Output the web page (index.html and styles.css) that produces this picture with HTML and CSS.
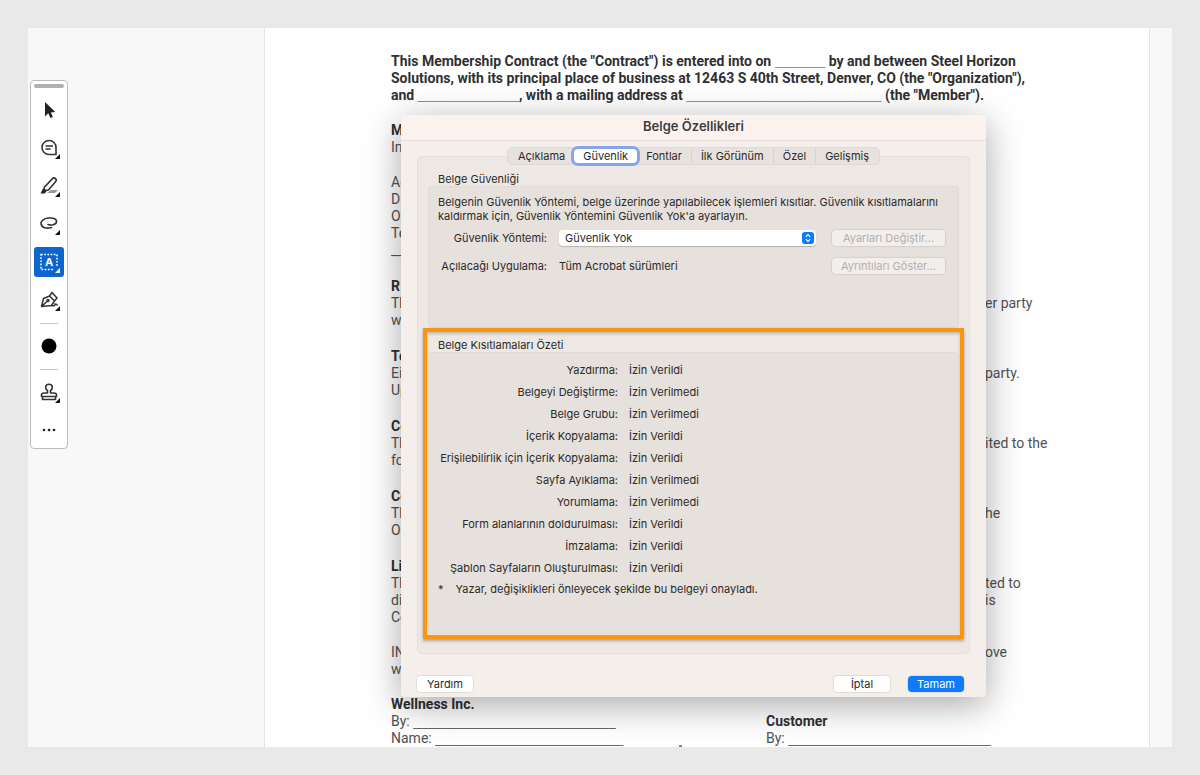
FILE: index.html
```html
<!DOCTYPE html>
<html lang="tr">
<head>
    <meta charset="UTF-8">
    <meta name="viewport" content="width=device-width, initial-scale=1.0">
    <title>Belge Özellikleri</title>
    <link rel="stylesheet" href="styles.css">
</head>
<body>

    <div class="viewer">
        <aside class="sidebar">
            <div class="toolbar">
                <span class="handle"></span>
                <button class="tool" aria-label="Select">
                    <svg width="30" height="30" viewBox="0 0 30 30"><path d="M11 7v14.500l3.300-3.200 2.100 4.700 2.500-1.100-2.100-4.500 4.500-.4z" fill="#222"/></svg>
                </button>
                <button class="tool" aria-label="Comment">
                    <svg width="30" height="30" viewBox="0 0 30 30" fill="none" stroke="#333" stroke-width="1.600"><path d="M15 7.500a7 7 0 1 0 0 14h7v-7a7 7 0 0 0-7-7z"/><path d="M11.500 13h7.500M11.500 16h5"/><path class="corner" d="M26 21v5h-5z"/></svg>
                </button>
                <button class="tool" aria-label="Highlight">
                    <svg width="30" height="30" viewBox="0 0 30 30" fill="none" stroke="#333" stroke-width="1.600" stroke-linejoin="round"><path d="M13 22h8l3-3h-7z" fill="#999" stroke="none"/><path d="M10.500 16 18.500 7.600q1.500-1.300 3 0 1.500 1.500.2 3L14.500 19l-3 .5-1.500-1.500z"/><path d="M6.500 22.500 9 17.500l3.500 3-2 2z" fill="#222" stroke="none"/><path class="corner" d="M26 21v5h-5z"/></svg>
                </button>
                <button class="tool" aria-label="Draw">
                    <svg width="30" height="30" viewBox="0 0 30 30" fill="none" stroke="#333" stroke-width="1.600" stroke-linecap="round"><path d="M14 15.500c3 1 8 .3 8.500-2.500.4-3.500-4-4.300-8-4-4.700.4-8 3-7.400 6 .7 3.800 5.500 5 10.400 3.500"/><path class="corner" d="M26 21v5h-5z"/></svg>
                </button>
                <button class="tool active" aria-label="Select text">
                    <svg width="30" height="30" viewBox="0 0 30 30"><path d="M7 7.500h16v15H7z" fill="none" stroke="#fff" stroke-width="1.500" stroke-dasharray="1.700 1.500"/><text x="15" y="19" text-anchor="middle" class="tool-letter">A</text><path d="M20 20h7v7h-7z" fill="#0d66d0"/><path d="M26 21v5h-5z" fill="#fff"/></svg>
                </button>
                <button class="tool" aria-label="Sign">
                    <svg width="30" height="30" viewBox="0 0 30 30" fill="none" stroke="#333" stroke-width="1.500" stroke-linejoin="round"><path d="M7.500 21.500 9.500 13.500 15.500 11l5 5-3 4.500zM15.500 11 18 7.500l5 5.500-2.500 3M7.500 21.500l6-5.500"/><circle cx="14" cy="15.500" r="1"/><path d="M17.500 20.500q4 1 3.500-1.500 2 0 2.500 1.500"/><path class="corner" d="M26 21v5h-5z"/></svg>
                </button>
                <span class="divider"></span>
                <button class="tool" aria-label="Color">
                    <svg width="30" height="30" viewBox="0 0 30 30"><circle cx="15" cy="15" r="7.500" fill="#000"/></svg>
                </button>
                <span class="divider"></span>
                <button class="tool" aria-label="Stamp">
                    <svg width="30" height="30" viewBox="0 0 30 30" fill="none" stroke="#333" stroke-width="1.600" stroke-linejoin="round"><path d="M13.500 16v-2.500q-1.800-1-1.800-3a3.300 3.200 0 0 1 6.600 0q0 2-1.800 3V16h3.500q2.500 0 2.500 2v1.500h-15V18q0-2 2.500-2zM8.500 19.500v3h13v-3"/><path class="corner" d="M26 21v5h-5z"/></svg>
                </button>
                <button class="tool" aria-label="More">
                    <svg width="30" height="30" viewBox="0 0 30 30" fill="#222"><circle cx="10" cy="15" r="1.300"/><circle cx="15" cy="15" r="1.300"/><circle cx="20" cy="15" r="1.300"/></svg>
                </button>
            </div>
        </aside>

        <main class="page">
            <article class="contract" lang="en">
                <p class="block intro">This Membership Contract (the "Contract") is entered into on <span class="blank">_______</span> by and between Steel Horizon<br>
                Solutions, with its principal place of business at 12463 S 40th Street, Denver, CO (the "Organization"),<br>
                and <span class="blank">______________</span>, with a mailing address at <span class="blank">___________________________</span> (the "Member").</p>

                <div class="block">
                    <h2>M</h2>
                    <p class="line">In</p>
                </div>
                <div class="block">
                    <p class="line">Ad</p>
                    <p class="line">D</p>
                    <p class="line">O</p>
                    <p class="line">Te</p>
                    <p class="line">__</p>
                </div>
                <div class="block section">
                    <h2>R</h2>
                    <p class="line"><span class="start">Th</span><span>er party</span></p>
                    <p class="line">w</p>
                </div>
                <div class="block section">
                    <h2>Te</h2>
                    <p class="line"><span class="start">Ei</span><span>party.</span></p>
                    <p class="line">Up</p>
                </div>
                <div class="block section">
                    <h2>Co</h2>
                    <p class="line"><span class="start">Th</span><span>ited to the</span></p>
                    <p class="line">fo</p>
                </div>
                <div class="block section">
                    <h2>Co</h2>
                    <p class="line"><span class="start">Th</span><span>he</span></p>
                    <p class="line">O</p>
                </div>
                <div class="block section">
                    <h2>Li</h2>
                    <p class="line"><span class="start">Th</span><span>ted to</span></p>
                    <p class="line"><span class="start">di</span><span>is</span></p>
                    <p class="line">Co</p>
                </div>
                <div class="block">
                    <p class="line"><span class="start">IN</span><span>ove</span></p>
                    <p class="line">w</p>
                </div>
                <div class="block signatures">
                    <div class="party">
                        <h2>Wellness Inc.</h2>
                        <p>By: <span class="blank">____________________________</span></p>
                        <p>Name: <span class="blank">__________________________</span></p>
                    </div>
                    <div class="party customer">
                        <h2>Customer</h2>
                        <p>By: <span class="blank">____________________________</span></p>
                    </div>
                </div>
            </article>
            <span class="marker"></span>

            <div class="dialog" role="dialog" aria-labelledby="dialogTitle">
                <h1 class="titlebar" id="dialogTitle">Belge Özellikleri</h1>

                <div class="dialog-body">
                    <div class="tabs" role="tablist">
                        <button class="tab" role="tab">Açıklama</button>
                        <button class="tab selected" role="tab" aria-selected="true">Güvenlik</button>
                        <button class="tab" role="tab">Fontlar</button>
                        <button class="tab split" role="tab">İlk Görünüm</button>
                        <button class="tab split" role="tab">Özel</button>
                        <button class="tab split" role="tab">Gelişmiş</button>
                    </div>

                    <div class="panel">
                        <section class="security">
                            <h3>Belge Güvenliği</h3>
                            <div class="box">
                                <p class="hint">Belgenin Güvenlik Yöntemi, belge üzerinde yapılabilecek işlemleri kısıtlar. Güvenlik kısıtlamalarını kaldırmak için, Güvenlik Yöntemini Güvenlik Yok'a ayarlayın.</p>
                                <div class="fields">
                                    <label for="method">Güvenlik Yöntemi:</label>
                                    <div class="select">
                                        <select id="method">
                                            <option>Güvenlik Yok</option>
                                        </select>
                                        <svg class="stepper" width="12" height="12" viewBox="0 0 12 12"><rect width="12" height="12" rx="3" fill="#0a7aff"/><path d="M3.800 4.800 6 2.600l2.200 2.200M3.800 7.200 6 9.400l2.200-2.200" fill="none" stroke="#fff" stroke-width="1.200"/></svg>
                                    </div>
                                    <button class="btn" disabled>Ayarları Değiştir...</button>
                                    <span class="field-name">Açılacağı Uygulama:</span>
                                    <span>Tüm Acrobat sürümleri</span>
                                    <button class="btn" disabled>Ayrıntıları Göster...</button>
                                </div>
                            </div>
                        </section>

                        <section class="restrictions">
                            <h3>Belge Kısıtlamaları Özeti</h3>
                            <div class="box">
                                <table>
                                    <tbody>
                                        <tr><th scope="row">Yazdırma:</th><td>İzin Verildi</td></tr>
                                        <tr><th scope="row">Belgeyi Değiştirme:</th><td>İzin Verilmedi</td></tr>
                                        <tr><th scope="row">Belge Grubu:</th><td>İzin Verilmedi</td></tr>
                                        <tr><th scope="row">İçerik Kopyalama:</th><td>İzin Verildi</td></tr>
                                        <tr><th scope="row">Erişilebilirlik için İçerik Kopyalama:</th><td>İzin Verildi</td></tr>
                                        <tr><th scope="row">Sayfa Ayıklama:</th><td>İzin Verilmedi</td></tr>
                                        <tr><th scope="row">Yorumlama:</th><td>İzin Verilmedi</td></tr>
                                        <tr><th scope="row">Form alanlarının doldurulması:</th><td>İzin Verildi</td></tr>
                                        <tr><th scope="row">İmzalama:</th><td>İzin Verildi</td></tr>
                                        <tr><th scope="row">Şablon Sayfaların Oluşturulması:</th><td>İzin Verildi</td></tr>
                                    </tbody>
                                </table>
                                <p class="note"><span>*</span><span>Yazar, değişiklikleri önleyecek şekilde bu belgeyi onayladı.</span></p>
                            </div>
                        </section>
                    </div>

                    <div class="actions">
                        <button class="btn help">Yardım</button>
                        <button class="btn">İptal</button>
                        <button class="btn primary">Tamam</button>
                    </div>
                </div>
            </div>
        </main>
        <div class="rail"></div>
    </div>

</body>
</html>
```
FILE: styles.css
```css
* {
    box-sizing: border-box;
}
body {
    margin: 0;
    padding: 28px;
    background: #e9e9e9;
    font-family: Inter, "Liberation Sans", sans-serif;
    font-size: 11px;
    line-height: 14px;
    color: #2b2928;
}
h1, h2, h3, p {
    margin: 0;
    font-size: inherit;
}
button, select {
    font: inherit;
    color: inherit;
}

/* viewer */
.viewer {
    display: flex;
    height: calc(100vh - 56px);
    overflow: hidden;
    background: #f8f8f8;
}
.sidebar {
    flex: 0 0 236px;
    padding: 52px 2px;
}
.rail {
    flex: 0 0 22px;
}
.page {
    position: relative;
    flex: 1;
    overflow: hidden;
    background: #fff;
    border-left: 1px solid #e4e4e4;
    border-right: 1px solid #e4e4e4;
}

/* toolbar */
.toolbar {
    display: flex;
    flex-direction: column;
    align-items: center;
    gap: 8px;
    width: 38px;
    padding: 3px 0;
    background: #fff;
    border: 1px solid #bcbcbc;
    border-radius: 4px;
}
.handle {
    width: 30px;
    height: 4px;
    margin-bottom: -1px;
    border-radius: 2px;
    background: #b1b1b1;
}
.tool {
    width: 30px;
    height: 30px;
    padding: 0;
    border: 0;
    border-radius: 3px;
    background: none;
}
.tool svg {
    display: block;
}
.tool.active {
    background: #0d66d0;
}
.tool-letter {
    font-size: 11px;
    font-weight: 700;
    fill: #fff;
}
.corner {
    fill: #111;
    stroke: none;
}
.divider {
    width: 18px;
    height: 1px;
    margin-bottom: -1px;
    background: #c6c6c6;
}

/* contract */
.contract {
    padding: 25px 0 0 126px;
    font-family: Roboto, "Liberation Sans", sans-serif;
    font-size: 14px;
    line-height: 17px;
    color: #505255;
    white-space: nowrap;
}
.contract h2, .intro {
    font-weight: 700;
    color: #2f3032;
}
.blank {
    font-family: "Liberation Sans", Arial, sans-serif;
    font-size: 13px;
    line-height: 1;
}
.block {
    margin-bottom: 18px;
}
.block:has(+ .section) {
    margin-bottom: 19px;
}
.line {
    display: flex;
}
.start {
    flex: 0 0 594px;
}
.signatures {
    display: flex;
}
.party {
    flex: 0 0 375px;
}
.customer {
    padding-top: 17px;
}
.marker {
    position: absolute;
    left: 414px;
    bottom: 0;
    width: 3px;
    height: 2px;
    background: #3aa6a6;
}

/* dialog */
.dialog {
    position: absolute;
    top: 87px;
    left: 136px;
    right: 163px;
    background: #f4efeb;
    border-radius: 4px;
    box-shadow: 0 8px 36px rgba(0, 0, 0, 0.35);
}
.titlebar {
    padding: 4px 0 7px;
    background: #fcf3ef;
    border-bottom: 1px solid #e6deda;
    border-radius: 4px 4px 0 0;
    font-size: 13px;
    font-weight: 600;
    text-align: center;
    color: #403c3b;
}
.dialog-body {
    display: flex;
    flex-direction: column;
    padding: 6px 16px 5px;
}
.tabs {
    position: relative;
    display: flex;
    align-self: center;
    padding: 1px;
    background: #e8e2de;
    border: 1px solid #e0dad6;
    border-radius: 5px;
}
.tab {
    padding: 0 9px;
    border: 0;
    border-radius: 4px;
    background: none;
}
.tab.selected {
    background: #fff;
    box-shadow: 0 0 0 3px #86a5ea;
}
.tab.split {
    border-left: 1px solid #d8d2ce;
    border-radius: 0;
}
.panel {
    display: flex;
    flex-direction: column;
    margin-top: -9px;
    padding: 16px 5px 14px;
    background: #ede8e4;
    border: 1px solid #e4dfdb;
    border-radius: 5px;
}
.panel h3 {
    padding-left: 10px;
    font-weight: 400;
    line-height: 13px;
}
.box {
    background: #e6e1dd;
    border: 1px solid #dfdad6;
    border-radius: 4px;
}
.security {
    padding: 0 5px;
}
.security .box {
    padding: 8px 13px 53px 9px;
}
.fields {
    display: grid;
    grid-template-columns: 109px 1fr 113px;
    align-items: center;
    gap: 12px;
    margin-top: 7px;
}
.fields label, .field-name {
    text-align: right;
}
.select {
    position: relative;
    display: flex;
    margin-right: 4px;
}
.select select {
    width: 100%;
    height: 16px;
    padding: 0 6px;
    appearance: none;
    border: 0;
    border-radius: 4px;
    background: #fff;
    box-shadow: 0 1px 1px rgba(0, 0, 0, 0.2);
}
.stepper {
    position: absolute;
    top: 2px;
    right: 2px;
    pointer-events: none;
}
.btn {
    height: 16px;
    padding: 0 8px;
    border: 0;
    border-radius: 4px;
    background: #fff;
    box-shadow: 0 0 1px 1px rgba(0, 0, 0, 0.08);
}
.btn:disabled {
    background: #f1eeec;
    color: #b4b0ae;
}

/* highlighted group */
.restrictions {
    border: 4px solid #f7960f;
    box-shadow: 0 2px 3px rgba(0, 0, 0, 0.3), inset 0 2px 3px rgba(0, 0, 0, 0.2);
    padding: 7px 1px 1px;
}
.restrictions .box {
    padding: 6px 9px 37px;
}
table {
    border-collapse: collapse;
}
th, td {
    height: 22px;
    padding: 0;
    font-weight: 400;
    text-align: left;
}
th {
    width: 180px;
    text-align: right;
    white-space: nowrap;
}
td {
    padding-left: 11px;
}
.note {
    display: flex;
    gap: 12px;
    margin-top: 3px;
}
.actions {
    display: flex;
    gap: 18px;
    margin-top: 22px;
    padding-right: 6px;
}
.actions .btn {
    width: 56px;
}
.actions .help {
    margin-right: auto;
}
.actions .primary {
    background: #0d7bfa;
    color: #fff;
}
```
